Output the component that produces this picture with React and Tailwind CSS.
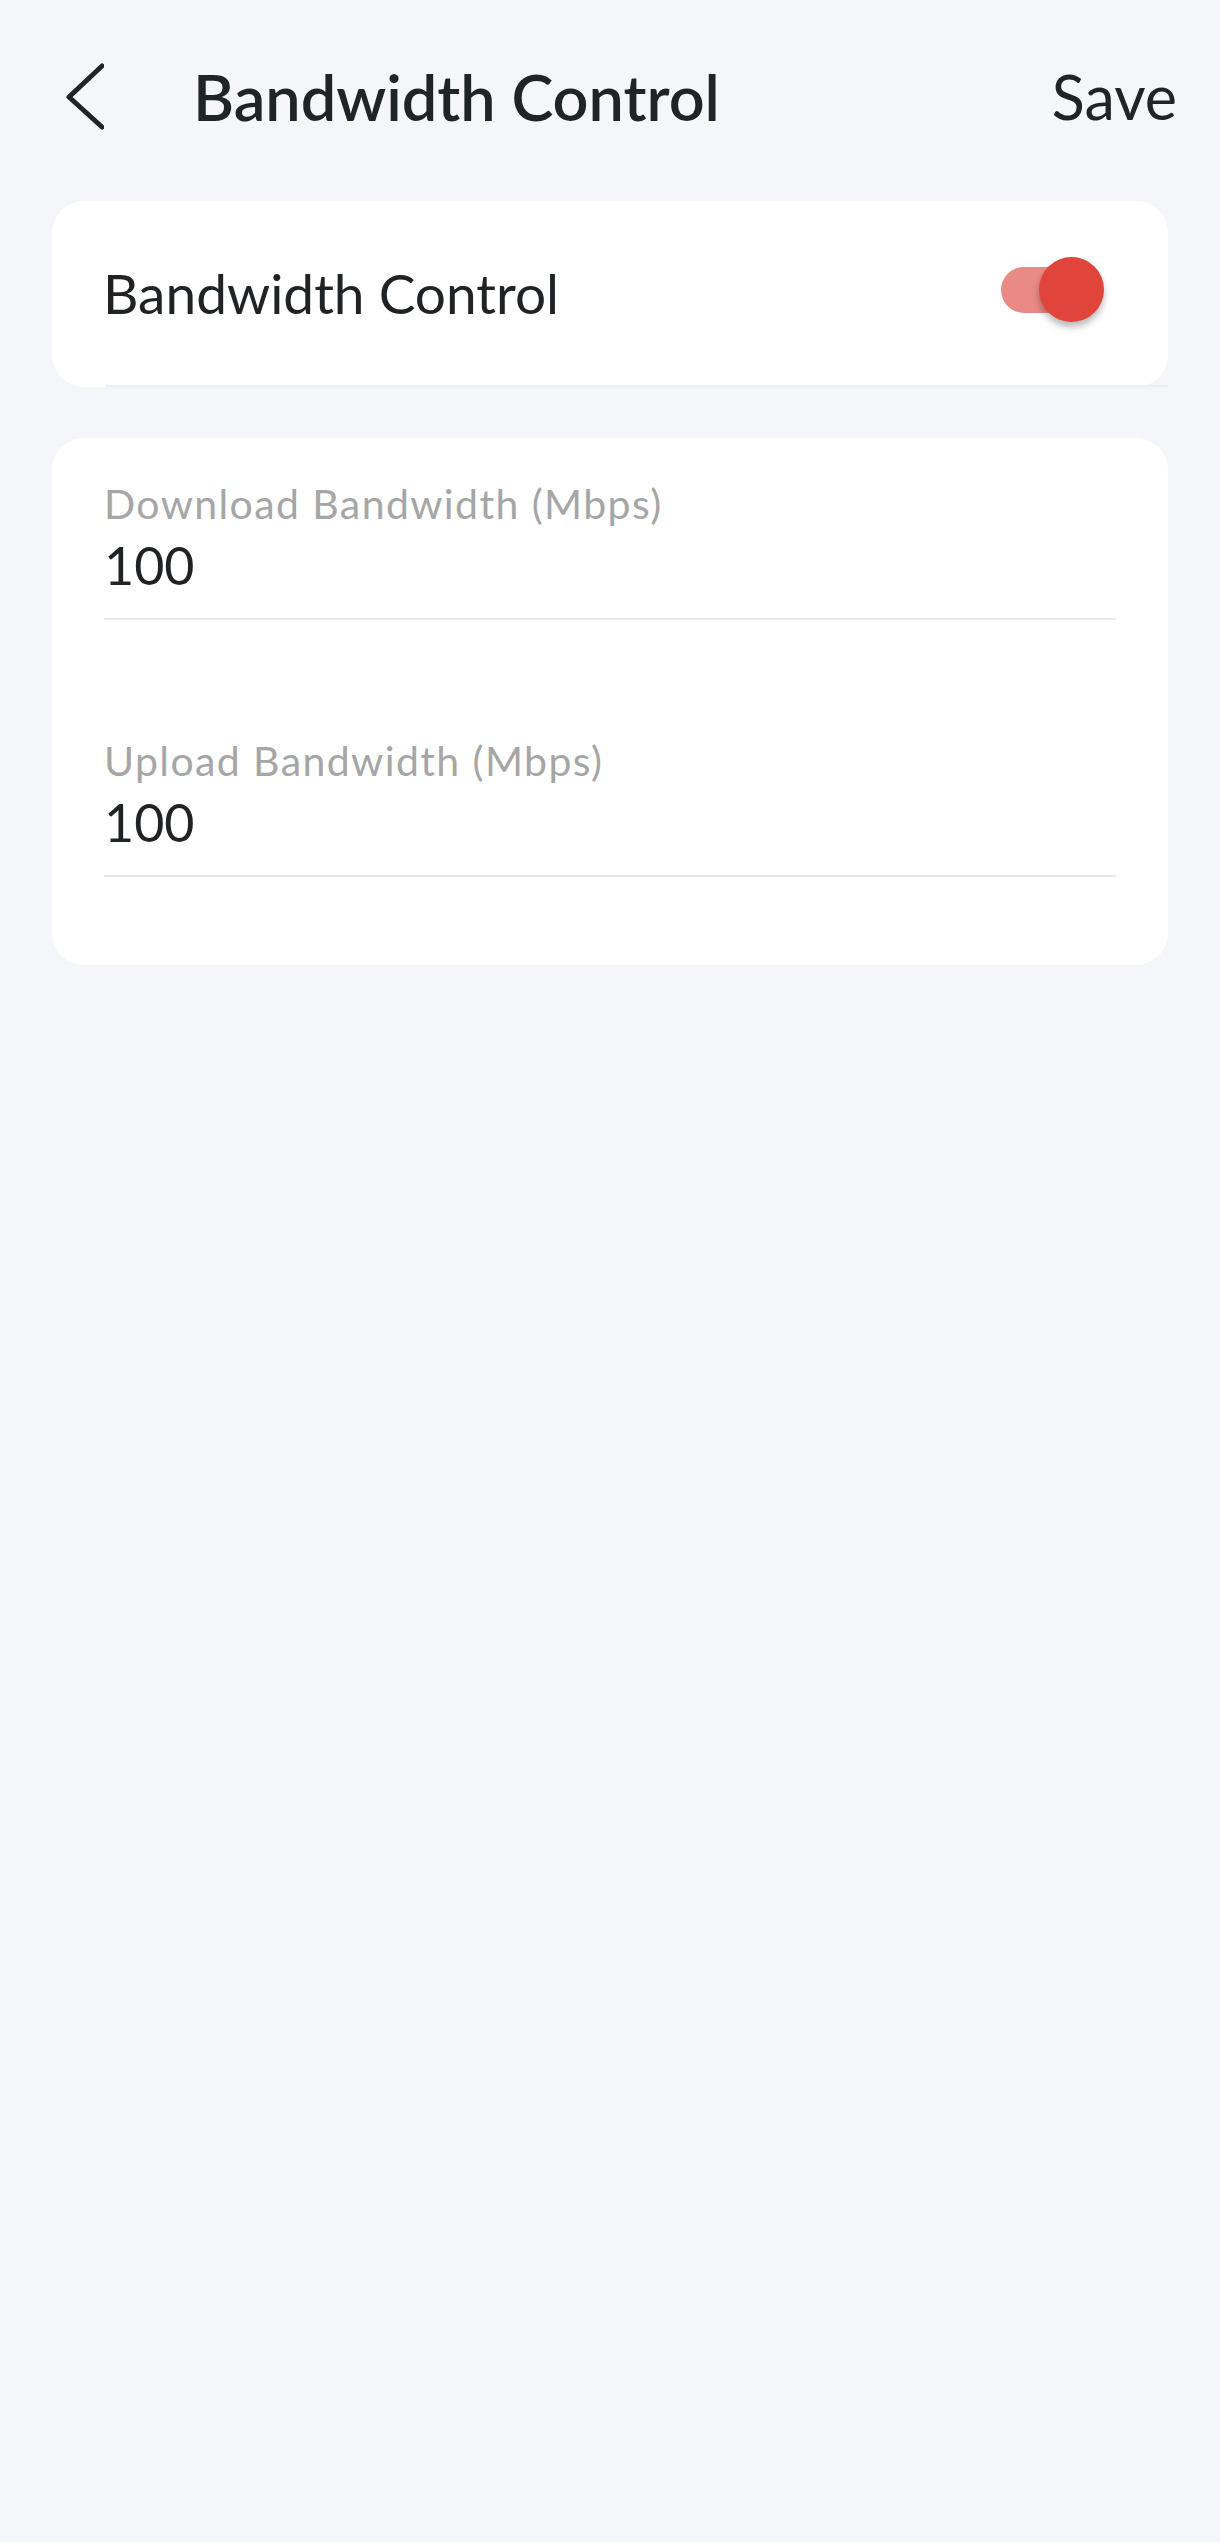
import React, { useState } from 'react';

const BackIcon = () => (
  <svg width="40" height="70" viewBox="0 0 40 70" fill="none" className="block">
    <path d="M38 4 L5 35 L38 65" stroke="#1f2427" strokeWidth="5" strokeLinecap="round" strokeLinejoin="round" />
  </svg>
);

const Toggle = ({ on, onChange }) => (
  <button type="button" onClick={() => onChange(!on)} className="relative w-[103px] h-[66px] shrink-0">
    <span className="absolute left-0 top-[10px] w-[88px] h-[46px] rounded-full bg-[#ea8a86]" />
    <span className="absolute right-0 top-0 w-[65px] h-[65px] rounded-full bg-[#e0443b] shadow-[0_5px_7px_rgba(0,0,0,0.28)]" />
  </button>
);

const Field = ({ label, value }) => (
  <div>
    <div className="text-[41px] leading-[49px] text-[#a6a6a6] tracking-[1.4px]">{label}</div>
    <div className="mt-[5px] text-[52px] leading-[65px] text-[#1f2326]">{value}</div>
    <div className="mt-[20px] h-[2px] bg-[#e8e9ea]" />
  </div>
);

const App = () => {
  const [enabled, setEnabled] = useState(true);

  return (
    <div className="min-h-[2545px] bg-[#f5f6fa] flex flex-col" style={{ fontFamily: 'Lato, "Noto Sans", sans-serif' }}>
      <header className="h-[194px] mb-[7px] flex items-center pl-[64px] pr-[43px]">
        <BackIcon />
        <h1 className="ml-[89px] text-[63px] leading-[76px] font-semibold text-[#1f2427]">Bandwidth Control</h1>
        <button type="button" className="ml-auto text-[61px] leading-[72px] text-[#1f2427]">Save</button>
      </header>

      <div className="mx-[52px] bg-white rounded-[32px]">
        <div className="h-[184px] flex items-center pl-[51px] pr-[64px]">
          <span className="text-[55px] leading-[66px] text-[#1f2326]">Bandwidth Control</span>
          <div className="ml-auto">
            <Toggle on={enabled} onChange={setEnabled} />
          </div>
        </div>
        <div className="ml-[53px] h-[2px] bg-[#eceef2]" />
      </div>

      <div className="mx-[52px] mt-[51px] bg-white rounded-[32px] pt-[41px] pb-[88px] pl-[52px] pr-[52px]">
        <Field label="Download Bandwidth (Mbps)" value="100" />
        <div className="mt-[116px]">
          <Field label="Upload Bandwidth (Mbps)" value="100" />
        </div>
      </div>

      <div className="flex-1" />
      <div className="h-[3px] bg-white" />
    </div>
  );
};

export default App;
